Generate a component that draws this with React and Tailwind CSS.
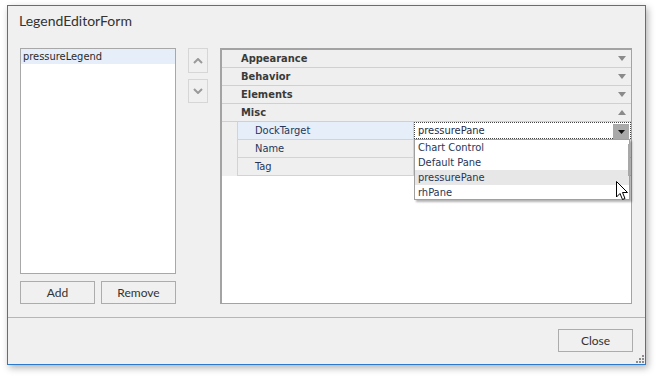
import React from "react";

const tahoma = "font-['DejaVu_Sans_Condensed','Liberation_Sans',sans-serif]";
const segoe = "font-['Lato','Liberation_Sans',sans-serif]";

function Tri({ up }) {
  return (
    <svg width="8" height="5" viewBox="0 0 8 5" className="mr-[5px]">
      {up ? (
        <polygon points="0,5 8,5 4,0" fill="#8a8a8a" />
      ) : (
        <polygon points="0,0 8,0 4,5" fill="#8a8a8a" />
      )}
    </svg>
  );
}

function Category({ label, up }) {
  return (
    <div className="h-[18px] flex items-center justify-between bg-[#eeefee] border-b border-[#cfd0cf]">
      <span className={`pl-[19px] pt-[1px] text-[11px] font-bold text-[#3a3a3a] ${tahoma}`}>
        {label}
      </span>
      <Tri up={up} />
    </div>
  );
}

function PropRow({ name, active, children }) {
  return (
    <div className="h-[18px] flex bg-[#eeefee]">
      <div className="w-[15px]" />
      <div
        className={`w-[176px] flex items-center pl-[17px] pt-[1px] border-l border-b border-[#d2d3d2] text-[11px] text-[#27375a] ${tahoma} ${
          active ? "bg-[#e6eef9]" : ""
        }`}
      >
        {name}
      </div>
      <div className="flex-1 relative border-b border-l border-[#d2d3d2]">{children}</div>
    </div>
  );
}

function Chevron({ up }) {
  return (
    <svg width="10" height="6" viewBox="0 0 10 6">
      <polyline
        points={up ? "1,5 5,1 9,5" : "1,1 5,5 9,1"}
        fill="none"
        stroke="#9a9a9a"
        strokeWidth="2"
      />
    </svg>
  );
}

export default function App() {
  const items = ["Chart Control", "Default Pane", "pressurePane", "rhPane"];
  return (
    <div className="w-[659px] h-[380px] bg-white pl-[7px] pt-[5px]">
      <div className="relative w-[639px] h-[360px] border border-[#2c79d0] bg-[#eff0ef] shadow-[2px_3px_7px_rgba(0,0,0,0.3)] flex flex-col">
        <div className={`h-[42px] pl-[11px] pt-[6px] text-[14px] leading-[18px] text-[#333] ${segoe}`}>
          LegendEditorForm
        </div>

        <div className="flex px-[12px] h-[256px]">
          <div className="w-[156px] flex flex-col">
            <div className="h-[226px] border border-[#a8a8a8] bg-white">
              <div className={`h-[15px] bg-[#e6eef9] pl-[2px] text-[11px] leading-[15px] text-[#2a2a2a] ${tahoma}`}>
                pressureLegend
              </div>
            </div>
            <div className="mt-[7px] flex gap-[6px]">
              <button className={`w-[75px] h-[23px] border border-[#acacac] text-[12px] text-[#333] ${segoe}`}>
                Add
              </button>
              <button className={`w-[75px] h-[23px] border border-[#acacac] text-[12px] text-[#333] ${segoe}`}>
                Remove
              </button>
            </div>
          </div>

          <div className="ml-[12px] w-[20px] flex flex-col">
            <div className="h-[25px] border border-[#d6d6d6] flex items-center justify-center">
              <Chevron up />
            </div>
            <div className="mt-[6px] h-[24px] border border-[#d6d6d6] flex items-center justify-center">
              <Chevron />
            </div>
          </div>

          <div className="ml-[12px] w-[412px] h-[256px] relative bg-white border-t-2 border-l-2 border-r border-b border-[#a3a3a3]">
            <Category label="Appearance" />
            <Category label="Behavior" />
            <Category label="Elements" />
            <Category label="Misc" up />
            <PropRow name="DockTarget" active>
              <div className="absolute inset-0 bg-white border border-dotted border-[#444] flex items-center">
                <span className={`pl-[3px] pt-[1px] text-[11px] text-[#1f2b44] ${tahoma}`}>pressurePane</span>
                <div className="absolute right-[1px] top-[1px] w-[16px] h-[15px] bg-[#a9a9a9] flex items-center justify-center">
                  <svg width="7" height="4" viewBox="0 0 7 4">
                    <polygon points="0,0 7,0 3.5,4" fill="#111" />
                  </svg>
                </div>
              </div>
            </PropRow>
            <PropRow name="Name" />
            <PropRow name="Tag" />

            <div className="absolute left-[192px] top-[89px] w-[216px] h-[61px] bg-white border border-[#a0a0a0] shadow-[2px_2px_2px_rgba(0,0,0,0.3)]">
              {items.map((it) => (
                <div
                  key={it}
                  className={`h-[15px] pl-[3px] text-[11px] leading-[15px] text-[#27375a] ${tahoma} ${
                    it === "pressurePane" ? "bg-[#e6e7e6]" : ""
                  }`}
                >
                  {it}
                </div>
              ))}
              <div className="absolute right-[-1px] top-[4px] w-[2px] h-[32px] bg-[#a8a8a8]" />
            </div>

            <svg
              className="absolute left-[394px] top-[131px]"
              width="13"
              height="20"
              viewBox="0 0 13 20"
            >
              <polygon
                points="0.5,0.5 0.5,16 4,12.5 6.5,18.5 9,17.5 6.5,11.5 11.5,11.5"
                fill="#fff"
                stroke="#000"
                strokeWidth="1"
                strokeLinejoin="miter"
              />
            </svg>
          </div>
        </div>

        <div className="mt-[13px] flex-1 border-t border-[#b6b6b6] flex justify-end items-start pt-[11px] pr-[12px]">
          <button className={`w-[75px] h-[23px] border border-[#acacac] text-[12px] text-[#333] ${segoe}`}>
            Close
          </button>
        </div>

        <svg className="absolute right-[1px] bottom-[1px]" width="8" height="8" viewBox="0 0 8 8">
          <rect x="6" y="0" width="2" height="2" fill="#8c8c8c" />
          <rect x="3" y="3" width="2" height="2" fill="#8c8c8c" />
          <rect x="6" y="3" width="2" height="2" fill="#8c8c8c" />
          <rect x="0" y="6" width="2" height="2" fill="#8c8c8c" />
          <rect x="3" y="6" width="2" height="2" fill="#8c8c8c" />
          <rect x="6" y="6" width="2" height="2" fill="#8c8c8c" />
        </svg>
      </div>
    </div>
  );
}
